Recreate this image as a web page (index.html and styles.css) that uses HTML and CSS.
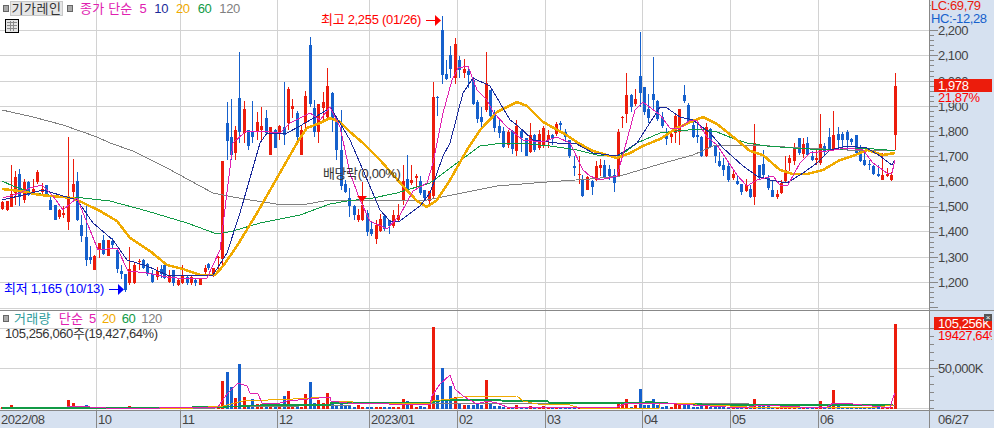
FILE: index.html
```html
<!DOCTYPE html>
<html lang="ko">
  <head>
    <meta charset="UTF-8" />
    <title>기가레인 차트</title>
    <link rel="stylesheet" href="styles.css">
  </head>
  <body>
    <div class="chart">
      <div class="pane pane-price">
        <div class="plot">
          <svg id="price-plot" width="929" height="310"></svg>

          <div class="legend">
            <span class="marker"></span>
            <span class="stock-name">기가레인</span>
            <span class="marker"></span>
            <span class="ma5 legend-title">종가 단순</span>
            <span class="ma5">5</span>
            <span class="ma10">10</span>
            <span class="ma20">20</span>
            <span class="ma60">60</span>
            <span class="ma120">120</span>
          </div>
          <svg class="table-icon" width="14" height="14" viewBox="0 0 14 14">
            <rect x="0.5" y="0.5" width="13" height="13" fill="#e4e4e4" stroke="#000" />
            <path d="M2 3.5h10M2 6.5h10M2 9.5h10M5.5 2v10M8.5 2v10" stroke="#8a8a8a" fill="none" />
          </svg>

          <div class="note note-high">최고 2,255 (01/26)</div>
          <div class="note note-low">최저 1,165 (10/13)</div>
          <div class="note note-ex">배당락(0,00%)</div>
        </div>
        <div class="axis">
          <svg id="price-axis" width="64" height="310"></svg>
          <div class="lc">LC:69,79</div>
          <div class="hc">HC:-12,28</div>
          <div class="last-box price-box">1,978</div>
          <div class="last-sub price-sub">21,87%</div>
        </div>
      </div>

      <div class="pane pane-volume">
        <div class="plot">
          <svg id="volume-plot" width="929" height="99"></svg>
          <div class="legend legend-volume">
            <span class="marker"></span>
            <span class="vol-title">거래량</span>
            <span class="ma5 legend-title">단순</span>
            <span class="ma5">5</span>
            <span class="ma20">20</span>
            <span class="ma60">60</span>
            <span class="ma120">120</span>
          </div>
          <div class="vol-total">105,256,060주(19,427,64%)</div>
        </div>
        <div class="axis">
          <svg id="volume-axis" width="64" height="99"></svg>
          <div class="last-box vol-box">105,256K</div>
          <div class="last-sub vol-sub">19427,64%</div>
          <div class="close-x">×</div>
        </div>
      </div>

      <div class="date-axis">
        <svg id="date-plot" width="929" height="17"></svg>
        <div class="date-end">06/27</div>
      </div>
    </div>

    <script src="chart.js"></script>
  </body>
</html>
```

FILE: styles.css
```css
* {
  box-sizing: border-box;
}

body {
  margin: 0;
  background-color: #fff;
  font-family: "Liberation Sans", "Noto Sans CJK KR", sans-serif;
  font-size: 13px;
  letter-spacing: -0.4px;
}

svg {
  display: block;
}

.chart {
  width: 994px;
  height: 428px;
  display: flex;
  flex-direction: column;
  overflow: hidden;
}

.pane {
  display: flex;
}

.pane-price {
  height: 311px;
  border-bottom: 1px solid #888;
}

.pane-volume {
  height: 99px;
}

.plot {
  position: relative;
  width: 929px;
}

.axis {
  position: relative;
  width: 65px;
  border-left: 1px solid #888;
  background-color: #d6e1f0;
  overflow: hidden;
}

/* legend lines over the plot */
.legend {
  position: absolute;
  top: 1px;
  left: 3px;
  height: 15px;
  display: flex;
  align-items: center;
  gap: 8px;
  white-space: nowrap;
  line-height: 15px;
}

.legend-volume {
  top: 0;
  gap: 6px;
}

.marker {
  width: 6px;
  height: 7px;
  background-color: #aaa;
  border: 1px solid #666;
}

.stock-name {
  width: 53px;
  height: 15px;
  margin: 0 -4px 0 -7px;
  text-align: center;
  color: #333;
  background-color: #e6e6e6;
  border: 1px solid #c8c8c8;
  line-height: 13px;
  letter-spacing: 0.6px;
}

.legend-title {
  margin-left: -1px;
  letter-spacing: 0.2px;
  margin-right: -1px;
}

.vol-title {
  color: #2f9c9c;
  margin: 0 2px 0 -1px;
  letter-spacing: 0.3px;
}

.legend-volume .legend-title {
  margin: 0;
}

.ma5 {
  color: #e020b0;
}

.ma10 {
  color: #1a2a9a;
}

.ma20 {
  color: #f0aa00;
}

.ma60 {
  color: #119a45;
}

.ma120 {
  color: #808080;
}

.table-icon {
  position: absolute;
  top: 19px;
  left: 5px;
}

.note {
  position: absolute;
  white-space: nowrap;
  line-height: 14px;
}

.note-high {
  top: 13px;
  left: 321px;
  color: #f00;
  letter-spacing: -0.3px;
}

.note-low {
  top: 282px;
  left: 4px;
  color: #00f;
  letter-spacing: -0.3px;
}

.note-ex {
  top: 167px;
  left: 323px;
  color: #333;
}

.vol-total {
  position: absolute;
  top: 16px;
  left: 5px;
  color: #333;
  line-height: 14px;
  white-space: nowrap;
}

/* labels over the right axis */
.lc,
.hc {
  position: absolute;
  left: 1px;
  width: 63px;
  height: 13px;
  line-height: 12px;
  background-color: #d6e1f0;
  white-space: nowrap;
}

.lc {
  top: 0;
  color: #e81a0c;
}

.hc {
  top: 13px;
  color: #1560cc;
}

.last-box {
  position: absolute;
  left: 4px;
  width: 58px;
  height: 13px;
  padding-left: 4px;
  background-color: #ec1c0c;
  color: #fff;
  line-height: 13px;
  white-space: nowrap;
  overflow: hidden;
}

.last-sub {
  position: absolute;
  left: 4px;
  width: 58px;
  height: 11px;
  padding-left: 4px;
  background-color: #d6e1f0;
  color: #f00;
  line-height: 11px;
  white-space: nowrap;
  overflow: hidden;
}

.price-box {
  top: 79px;
}

.price-sub {
  top: 92px;
}

.vol-box {
  top: 6px;
}

.vol-sub {
  top: 19px;
}

.close-x {
  position: absolute;
  top: 3px;
  left: 54px;
  width: 8px;
  height: 7px;
  background-color: #555;
  color: #fff;
  font-size: 8px;
  line-height: 7px;
  text-align: center;
}

.date-axis {
  display: flex;
  height: 18px;
  border-top: 1px solid #888;
  background-color: #d6e1f0;
}

.date-end {
  width: 65px;
  padding-left: 8px;
  border-left: 1px solid #888;
  color: #444;
  line-height: 17px;
}

#date-plot text,
.axis-label {
  fill: #444;
  font-family: "Liberation Sans", sans-serif;
  font-size: 13px;
  letter-spacing: -0.5px;
}
```

FILE: chart.js
```js
var RED = "#ec1c0c";
var BLUE = "#1560cc";
var GRID = "#d2d2d2";
var TICK = "#888";

var priceGrid = [30, 55, 81, 106, 131, 156, 181, 206, 231, 257, 282];
var priceLabels = ["2,200", "2,100", "2,000", "1,900", "1,800", "1,700", "1,600", "1,500", "1,400", "1,300", "1,200"];
var gridX = [96, 180, 277, 369, 457, 545, 642, 730, 818];

// x, colour, high, body top, body bottom, low, volume top
var candles = [
  [2,"r",201,202,209,210,408],[7,"r",201,201,210,211,408],[10.7,"r",165,194,207,207,405],[15,"r",171,177,193,205,408],
  [19,"b",169,174,197,206,408],[24,"r",179,182,200,203,408],[28,"b",181,182,195,196,408],[33,"r",179,189,193,195,408],
  [37,"r",170,172,182,184,408],[42,"r",183,189,192,196,408],[46,"b",185,185,195,196,408],[50,"b",195,200,210,210,408],
  [55,"b",205,205,220,220,408],[59,"r",209,210,217,219,408],[63,"r",206,213,215,218,408],[68,"r",137,196,222,230,400],
  [72.7,"r",159,184,192,201,403],[76.7,"b",172,181,220,221,406],[81,"b",215,225,236,242,406],[85.7,"b",205,237,260,266,405],
  [90,"b",246,257,260,264,407],[94,"r",255,256,270,270,407],[98.7,"r",243,243,250,258,407],[103,"b",235,240,254,255,408],
  [107.7,"r",240,240,256,256,408],[112,"b",238,241,245,248,408],[116.7,"b",248,250,269,273,408],[120.7,"b",265,271,274,279,408],
  [125,"b",274,274,290,292,408],[129,"r",247,269,283,285,406],[134,"r",263,265,283,284,408],[138.7,"r",259,261,262,270,408],
  [142.7,"b",259,260,268,269,408],[147,"b",263,264,274,276,408],[151.7,"b",270,274,282,283,408],[156.7,"r",267,271,277,280,408],
  [160.7,"b",265,269,274,278,408],[164,"b",264,265,278,279,408],[169,"r",270,275,282,283,408],[173,"b",270,270,283,286,408],
  [178,"r",278,280,285,286,408],[182,"r",265,276,283,284,408],[186.7,"b",276,277,283,285,408],[191,"r",276,277,283,285,408],
  [195,"b",279,280,283,286,408],[200,"r",278,278,285,285,408],[204.7,"r",265,268,272,275,408],[208,"b",263,264,268,270,408],
  [213,"r",268,268,275,277,408],[217.7,"r",256,257,258,271,408],[222,"r",161,161,259,268,381],[226.7,"b",102,123,141,160,372],
  [230.7,"b",99,137,155,160,387],[235,"r",126,130,153,160,398],[239,"b",52,98,132,143,364],[244,"r",101,109,133,143,397],
  [248,"b",130,130,146,150,406],[252,"b",101,131,137,143,399],[257,"r",112,122,131,140,404],[261,"r",107,126,130,140,404],
  [266,"b",110,118,133,135,406],[270,"r",127,127,155,155,408],[275,"b",129,130,148,148,406],[279,"r",125,126,132,140,406],
  [283.7,"b",82,127,135,145,396],[288,"r",87,89,123,130,391],[292,"r",99,106,109,118,404],[296.7,"b",111,113,137,145,407],
  [301,"r",125,130,155,155,407],[305,"r",91,96,123,130,394],[310,"b",37,45,104,107,382],[314,"b",100,108,132,137,403],
  [318,"r",104,104,132,143,400],[323,"r",92,102,108,120,403],[327,"r",68,86,117,120,393],[332,"b",92,93,120,132,403],
  [336,"b",118,120,150,160,405],[340.7,"b",110,150,186,190,402],[345,"b",180,184,192,193,405],[349,"b",188,198,206,217,405],
  [354,"b",205,206,215,220,407],[358,"r",209,215,220,222,405],[362,"r",182,205,220,221,408],[367,"b",210,213,232,236,408],
  [371,"b",222,229,234,236,408],[376,"r",220,225,239,244,408],[380,"r",214,219,231,232,408],[384,"b",215,216,229,231,408],
  [389,"b",220,220,226,234,408],[393,"r",210,215,226,228,407],[398,"r",204,215,220,221,407],[402.7,"r",165,181,200,205,399],
  [406.7,"b",155,179,189,190,401],[411,"r",165,180,183,185,405],[415.7,"r",174,176,178,187,407],[420,"b",176,181,193,195,406],
  [424,"b",190,190,198,200,407],[428.7,"r",191,191,201,206,405],[433,"r",82,97,196,198,327],[437,"b",96,97,98,116,395],
  [442,"b",16,30,75,84,368],[446,"b",60,74,79,80,399],[450,"b",46,55,69,78,386],[455,"r",38,44,78,84,397],
  [459,"b",56,60,70,78,403],[464,"r",59,69,73,78,405],[468,"b",66,71,75,88,405],[472.7,"b",77,80,104,105,405],
  [477,"b",100,102,119,123,403],[481,"b",107,117,122,127,405],[486,"r",52,83,110,112,380],[490,"b",90,90,116,118,403],
  [494,"b",110,112,128,132,406],[499,"b",120,126,133,138,406],[503,"b",127,131,147,148,407],[508,"r",130,132,145,148,407],
  [512,"b",130,131,149,154,407],[516,"r",120,126,151,156,405],[521,"b",130,131,138,152,408],[526,"b",138,138,156,156,408],
  [530,"r",123,135,152,153,406],[534,"b",134,135,150,152,407],[539,"r",130,134,148,150,407],[543,"r",126,128,146,148,406],
  [548,"r",130,135,140,148,408],[552,"b",134,135,139,145,408],[556,"r",122,124,134,136,407],[560,"b",121,123,125,133,408],
  [565,"b",129,132,137,142,408],[569,"b",140,140,156,158,408],[574,"b",156,166,168,176,408],[579,"r",156,174,175,184,408],
  [582,"b",175,179,196,197,408],[587,"r",176,177,190,190,408],[591.7,"b",180,181,187,195,408],[596,"r",161,166,180,181,408],
  [600,"r",159,165,168,176,408],[604,"b",160,165,177,178,408],[609,"b",165,169,176,180,408],[613.7,"b",169,175,183,192,408],
  [618,"r",129,132,176,177,402],[622,"r",116,117,118,128,403],[626,"r",73,95,114,123,399],[631,"b",94,95,107,112,407],
  [635,"r",89,99,104,106,405],[640,"b",32,76,93,107,389],[644,"b",87,87,112,115,405],[648,"b",94,109,118,123,405],
  [653,"b",57,94,100,110,399],[657,"b",100,101,119,121,405],[662,"b",112,117,126,128,407],[666,"b",128,134,139,145,406],
  [671,"r",133,134,137,143,407],[675,"r",113,116,133,143,404],[679,"r",109,109,132,145,403],[684,"b",85,95,101,103,405],
  [688,"b",103,105,122,124,405],[693,"b",122,125,137,138,407],[697,"b",120,135,137,143,407],[701,"b",136,137,156,157,406],
  [706,"r",123,127,156,157,404],[710,"b",128,129,147,148,407],[715,"b",145,146,156,163,408],[719,"b",152,161,166,167,408],
  [723,"b",158,165,170,176,408],[728,"b",161,166,180,182,408],[733,"r",169,174,178,180,408],[737,"b",175,181,184,185,408],
  [741,"b",184,184,192,195,408],[745.7,"r",179,185,191,192,408],[750,"b",185,189,197,198,408],[754,"r",124,143,197,205,399],
  [758.7,"b",165,165,178,180,406],[763,"b",150,164,175,177,406],[767.7,"b",175,178,188,190,406],[772,"b",181,190,197,197,408],
  [776.7,"r",190,194,197,199,408],[780.7,"r",180,183,193,194,408],[785,"r",156,170,181,183,408],[789,"r",155,158,163,171,405],
  [794,"r",143,148,161,165,408],[798.7,"b",138,138,153,155,408],[803,"r",138,144,154,158,408],[807,"b",137,143,155,155,408],
  [811.7,"b",151,156,160,161,408],[816,"r",150,158,160,165,408],[820,"r",114,144,163,165,401],[824,"b",143,146,151,155,408],
  [829,"b",128,137,150,150,405],[833,"r",111,135,149,150,390],[838,"b",127,134,140,150,406],[842,"b",132,134,140,148,407],
  [846.7,"b",130,132,140,150,407],[851,"b",138,139,142,145,408],[855.7,"b",135,135,153,155,408],[860,"b",145,148,161,162,408],
  [864,"b",153,160,165,166,408],[868.7,"b",160,164,165,170,408],[873,"b",165,166,174,175,408],[877.7,"b",165,174,176,177,408],
  [882,"r",153,175,180,180,408],[886.7,"r",168,174,176,177,408],[891,"r",172,175,180,181,408],[895.3,"r",73,86,135,150,324]
];

var priceLines = [
  { color: "#808080", width: 1, pts: "2,110 33,117 63,125 97,137 110,143 133,151 167,168 200,186 213,193 233,197 250,200 283,205 307,204 330,200 363,200 427,200 447,196 497,186 547,182 590,179 620,176 660,164 693,155 713,146 723,145 753,145 770,146 800,148 847,150 887,150 895,150" },
  { color: "#119a45", width: 1, pts: "2,181 13,186 33,193 57,196 83,198 110,201 147,211 187,223 217,234 233,231 260,223 300,215 330,204 347,201 373,198 397,193 430,183 457,163 480,146 503,143 530,144 550,146 577,150 597,155 620,156 637,143 660,133 677,131 700,129 717,132 732,138 747,143 767,146 793,148 827,150 860,148 887,150 895,150" },
  { color: "#f0aa00", width: 2.5, pts: "2,189 20,191 40,195 73,198 100,211 117,221 130,238 150,251 167,265 183,269 200,275 215,275 223,266 237,246 257,213 277,178 297,143 307,128 320,123 330,118 340,122 350,132 363,143 380,160 403,186 417,201 427,207 437,200 450,180 467,150 480,130 497,112 503,109 517,102 527,106 543,122 563,133 580,144 593,151 617,158 630,153 643,146 660,139 677,128 693,121 703,117 717,124 737,140 750,151 763,155 780,170 793,174 807,174 823,170 840,160 853,156 867,150 883,155 895,153" },
  { color: "#1a2a9a", width: 1, pts: "2,200 23,195 43,190 53,193 77,200 93,223 113,240 127,260 147,266 167,275 197,276 213,275 227,253 240,213 260,143 267,133 287,133 300,126 327,110 330,107 337,118 350,140 363,170 380,210 390,221 400,221 420,206 430,193 443,156 450,143 463,93 473,78 490,86 510,120 517,125 533,140 557,143 575,143 593,153 617,156 637,143 660,107 667,108 680,117 693,120 710,133 723,148 743,166 757,176 770,180 787,183 803,173 817,163 830,150 847,146 867,148 880,156 892,165 895,160" },
  { color: "#e020b0", width: 1, pts: "3,198 20,193 30,188 42,185 53,196 63,210 77,198 90,230 98,250 117,248 128,271 147,273 167,277 187,279 207,278 220,250 233,143 245,132 260,131 280,133 290,123 310,113 320,120 330,107 340,127 350,173 360,200 370,221 387,229 400,215 413,191 427,183 433,163 443,113 452,80 458,68 468,66 477,90 487,100 493,112 507,127 523,140 543,142 557,137 570,143 583,170 590,176 600,180 617,176 627,140 635,110 643,102 660,115 670,128 680,128 690,120 697,121 707,137 717,145 727,160 737,175 747,186 757,180 773,176 780,185 788,185 800,163 810,153 827,151 847,148 863,150 873,163 887,173 892,173 895,160" }
];

var volumeLines = [
  { color: "#808080", width: 1, pts: "2,408 215,408 222,407 300,406 352,405 430,405 431,403 748,403 749,404 778,404 779,405 895,405" },
  { color: "#119a45", width: 1.5, pts: "2,408 65,408 100,408 223,407 267,405 330,405 331,403 430,403 443,400 500,400 503,401 547,401 550,403 630,403 650,402 660,403 693,404 727,405 827,405 893,405" },
  { color: "#f0aa00", width: 1, pts: "160,408 193,408 223,406 243,401 293,399 330,397 331,401 352,401 353,403 430,403 433,401 450,399 463,397 517,396 523,401 537,404 570,405 580,408 659,408 660,404 677,403 693,403 697,405 710,405 730,406 747,407 877,407 893,405" },
  { color: "#e020b0", width: 1, pts: "67,406 90,407 106,408 159,408 218,407 227,394 238,383 247,386 250,393 258,394 262,403 277,404 287,401 330,397 331,401 347,403 430,405 432,396 440,384 450,375 455,389 463,396 477,404 487,401 497,403 507,407 543,407 617,407 627,403 660,403 693,405 743,408 760,405 800,407 827,407 833,403 853,404 890,408 893,398 895,393" }
];

function el(svg, name, attrs, text) {
  var node = document.createElementNS("http://www.w3.org/2000/svg", name);
  for (var key in attrs) {
    node.setAttribute(key, attrs[key]);
  }
  if (text) {
    node.textContent = text;
  }
  svg.appendChild(node);
  return node;
}

function rect(svg, x, y, w, h, fill) {
  return el(svg, "rect", { x: x, y: y, width: w, height: h, fill: fill, "shape-rendering": "crispEdges" });
}

function polyline(svg, line, shiftY) {
  var pts = line.pts.split(" ").map(function (p) {
    var xy = p.split(",");
    return xy[0] + "," + (xy[1] - shiftY);
  });
  el(svg, "polyline", {
    points: pts.join(" "),
    fill: "none",
    stroke: line.color,
    "stroke-width": line.width,
    "stroke-linejoin": "round",
    "shape-rendering": "crispEdges"
  });
}

function drawPrice() {
  var svg = document.getElementById("price-plot");
  priceGrid.concat([308]).forEach(function (y) {
    rect(svg, 0, y, 929, 1, GRID);
  });
  gridX.forEach(function (x) {
    rect(svg, x, 0, 1, 310, GRID);
  });

  candles.forEach(function (c) {
    var x = Math.round(c[0]);
    var color = c[1] === "r" ? RED : BLUE;
    rect(svg, x, c[2], 1, c[5] - c[2], color);
    rect(svg, x - 1, c[3], 3, c[4] - c[3], color);
  });

  priceLines.forEach(function (line) {
    polyline(svg, line, 0);
  });

  // high / low arrows and the ex-dividend mark
  rect(svg, 426, 20, 10, 1, "#f00");
  el(svg, "polygon", { points: "435,15 441,20.5 435,26", fill: "#f00" });
  rect(svg, 109, 289, 10, 1, "#00f");
  el(svg, "polygon", { points: "118,284 124,289.5 118,295", fill: "#00f" });
  el(svg, "polygon", { points: "357,196 367,196 362,202", fill: "#f00" });
}

function drawVolume() {
  var top = 311;
  var svg = document.getElementById("volume-plot");
  [328, 368, 408].forEach(function (y) {
    rect(svg, 0, y - top, 929, 1, GRID);
  });
  gridX.forEach(function (x) {
    rect(svg, x, 0, 1, 99, GRID);
  });

  candles.forEach(function (c) {
    var x = Math.round(c[0]);
    var volTop = Math.min(c[6], 407);
    rect(svg, x - 1, volTop - top, 3, 409 - volTop, c[1] === "r" ? RED : BLUE);
  });

  volumeLines.forEach(function (line) {
    polyline(svg, line, top);
  });
}

function drawPriceAxis() {
  var svg = document.getElementById("price-axis");
  for (var i = 0; i < 60; i++) {
    var y = Math.round(30.2 + i * 5.04);
    rect(svg, 0, y, i % 5 === 0 ? 8 : 4, 1, TICK);
  }
  rect(svg, 0, 5, 4, 1, TICK);
  priceLabels.forEach(function (label, i) {
    el(svg, "text", { x: 8, y: priceGrid[i] + 5, "class": "axis-label" }, label);
  });
}

function drawVolumeAxis() {
  var top = 311;
  var svg = document.getElementById("volume-axis");
  for (var y = 328; y <= 408; y += 8) {
    rect(svg, 0, y - top, y === 368 ? 8 : 4, 1, TICK);
  }
  el(svg, "text", { x: 8, y: 368 - top + 5, "class": "axis-label" }, "50,000K");
}

function drawDates() {
  var svg = document.getElementById("date-plot");
  var labels = [
    [-1, "2022/08"], [96, "10"], [180, "11"], [277, "12"], [369, "2023/01"],
    [457, "02"], [545, "03"], [642, "04"], [730, "05"], [818, "06"]
  ];
  labels.forEach(function (d) {
    if (d[0] > 0) {
      rect(svg, d[0], 0, 1, 17, TICK);
    }
    el(svg, "text", { x: d[0] + 2, y: 13 }, d[1]);
  });
}

drawPrice();
drawVolume();
drawPriceAxis();
drawVolumeAxis();
drawDates();
```
